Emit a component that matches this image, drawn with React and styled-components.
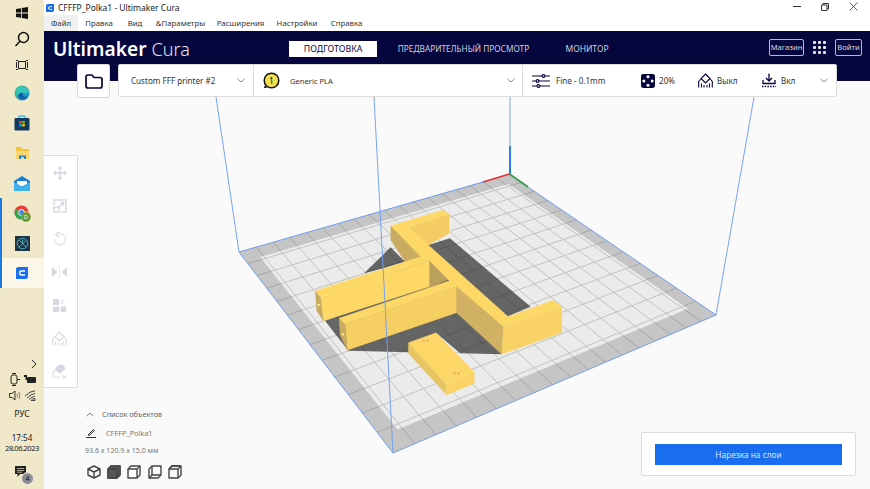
import React from 'react';
import styled, { createGlobalStyle } from 'styled-components';

const navy = '#06063f';
const uiFont = '"Noto Sans", "Open Sans", sans-serif';

const GlobalStyle = createGlobalStyle`
  html, body { margin: 0; padding: 0; width: 870px; height: 489px; overflow: hidden; }
  body { font-family: ${uiFont}; background: #fafafa; }
`;

const Desktop = styled.div`
  display: flex;
  width: 870px;
  height: 489px;
  overflow: hidden;
`;

/* ---------- windows taskbar ---------- */
const Taskbar = styled.div`
  width: 44px;
  flex: none;
  display: flex;
  flex-direction: column;
  background: #f1e7c9;
`;

const TaskItem = styled.div`
  height: ${({ $h }) => $h || 30}px;
  display: flex;
  align-items: center;
  justify-content: center;
  background: ${({ $active }) => ($active ? '#faf6e8' : 'transparent')};
  border-left: 2px solid ${({ $open }) => ($open ? '#1a7ae0' : 'transparent')};
  border-right: 2px solid transparent;
`;

const Tray = styled.div`
  margin-top: auto;
  display: flex;
  flex-direction: column;
  align-items: center;
  color: #222;
  font-size: 8.5px;
  padding-bottom: 7px;
`;

const TrayChevron = styled.div`
  align-self: flex-end;
  padding-right: 7px;
  height: 12px;
`;

const TrayRow = styled.div`
  display: flex;
  gap: 3px;
  height: 16px;
  align-items: center;
`;

const TrayLang = styled.div`
  margin-top: 2px;
  height: 27px;
  line-height: 18px;
`;

const TrayTime = styled.div`
  line-height: 11px;
  font-size: 8px;
`;

const TrayDate = styled.div`
  line-height: 11px;
  font-size: 7.6px;
  letter-spacing: -0.5px;
  white-space: nowrap;
`;

const Notify = styled.div`
  position: relative;
  margin-top: 12px;
  width: 16px;
  height: 16px;
  padding-left: 1px;
  box-sizing: border-box;
`;

const NotifyBadge = styled.span`
  position: absolute;
  right: -4px;
  bottom: -3px;
  width: 13px;
  height: 13px;
  border-radius: 50%;
  background: #8f8f8f;
  border: 1px solid #eee;
  box-sizing: border-box;
  color: #111;
  font-size: 7.5px;
  line-height: 11px;
  text-align: center;
`;

/* ---------- window chrome ---------- */
const Window = styled.div`
  flex: 1;
  display: flex;
  flex-direction: column;
  background: #fafafa;
  min-width: 0;
`;

const TitleBar = styled.div`
  height: 15px;
  background: #fff;
  display: flex;
  align-items: center;
  padding: 0 0 0 2px;
  font-size: 8.5px;
  color: #222;
  gap: 4px;
`;

const WindowButtons = styled.div`
  margin-left: auto;
  display: flex;
  align-items: center;
  gap: 20px;
  padding-right: 12px;
  height: 100%;
  position: relative;
  top: -1px;
`;

const MenuBar = styled.div`
  height: 16px;
  background: #fff;
  display: flex;
  align-items: center;
  font-size: 7.8px;
  color: #333;
`;

const MenuItem = styled.div`
  height: 100%;
  display: flex;
  align-items: center;
  width: ${({ $w }) => $w}px;
  justify-content: center;
  background: ${({ $active }) => ($active ? '#f0f0f0' : 'transparent')};
`;

const Header = styled.div`
  height: 50px;
  background: ${navy};
  display: flex;
  align-items: flex-start;
  padding-top: 8px;
  box-sizing: border-box;
`;

const Logo = styled.div`
  width: 245px;
  padding-left: 9px;
  box-sizing: border-box;
  font-size: 19.2px;
  line-height: 20px;
  color: #fff;
  font-weight: 600;
  white-space: nowrap;
`;

const LogoLight = styled.span`
  font-weight: 300;
  font-size: 18px;
  margin-left: 5px;
  color: #e4e4ee;
`;

const Tabs = styled.div`
  display: flex;
  align-items: center;
  height: 17px;
  margin-top: 1px;
`;

const Tab = styled.div`
  height: 16px;
  line-height: 16px;
  font-size: ${({ $fs }) => $fs || 8.8}px;
  text-align: center;
  width: ${({ $w }) => $w}px;
  margin-right: ${({ $gap }) => $gap || 0}px;
  white-space: nowrap;
  background: ${({ $active }) => ($active ? '#fff' : 'transparent')};
  color: ${({ $active }) => ($active ? navy : '#cfcfdc')};
`;

const HeaderRight = styled.div`
  margin-left: auto;
  margin-right: 8px;
  display: flex;
  align-items: center;
  height: 17px;
`;

const OutlineButton = styled.div`
  height: 17px;
  width: ${({ $w }) => $w}px;
  box-sizing: border-box;
  border: 1px solid #b9b9cc;
  border-radius: 2px;
  color: #d8d8e4;
  font-size: 7.6px;
  line-height: 15px;
  text-align: center;
`;

const AppsGrid = styled.div`
  margin: 0 9px;
  display: grid;
  grid-template-columns: repeat(3, 3px);
  gap: 2px;
`;

const AppsDot = styled.span`
  width: 3px;
  height: 3px;
  background: #e8e8f0;
  border-radius: 1px;
`;

/* ---------- stage ---------- */
const Stage = styled.div`
  position: relative;
  flex: 1;
  margin-top: -17px;
  display: flex;
  flex-direction: column;
  min-height: 0;
`;

const Scene = styled.svg`
  position: absolute;
  top: 0;
  left: 0;
  width: 826px;
  height: 425px;
`;

const TopRow = styled.div`
  position: relative;
  display: flex;
  align-items: flex-start;
  gap: 8px;
  margin-left: 33px;
`;

const Card = styled.div`
  background: #fff;
  border: 1px solid #dcdcdc;
  box-sizing: border-box;
  border-radius: 2px;
`;

const FolderButton = styled(Card)`
  width: 33px;
  height: 34px;
  display: flex;
  align-items: center;
  justify-content: center;
`;

const PrintBar = styled(Card)`
  width: 719px;
  height: 33px;
  display: flex;
  align-items: stretch;
  color: #333;
`;

const PrintSection = styled.div`
  width: ${({ $w }) => $w}px;
  box-sizing: border-box;
  display: flex;
  align-items: center;
  padding: 0 ${({ $pr }) => $pr || 0}px 0 ${({ $pl }) => $pl || 0}px;
  border-right: ${({ $last }) => ($last ? 'none' : '1px solid #dcdcdc')};
  font-size: ${({ $fs }) => $fs || 8.5}px;
  white-space: nowrap;
`;

const MaterialName = styled.span`
  margin-left: 10px;
`;

const Chevron = styled.span`
  margin-left: auto;
  display: flex;
`;

const Setting = styled.div`
  display: flex;
  align-items: center;
  gap: ${({ $gap }) => $gap || 5}px;
  width: ${({ $w }) => $w}px;
  font-size: 8.1px;
`;

const SideTools = styled(Card)`
  position: relative;
  margin-top: 57px;
  width: 34px;
  height: 233px;
  border-left: none;
  border-radius: 0 2px 2px 0;
  display: flex;
  flex-direction: column;
`;

const SideTool = styled.div`
  height: 33.2px;
  flex: none;
  display: flex;
  align-items: center;
  justify-content: center;
  padding-right: 2px;
`;

const BottomRow = styled.div`
  position: relative;
  margin-top: auto;
  display: flex;
  justify-content: space-between;
  align-items: flex-end;
  padding: 0 14px 13px 41px;
`;

const ObjectInfo = styled.div`
  display: flex;
  flex-direction: column;
  margin-bottom: -3px;
  color: #777;
  font-size: 7.3px;
`;

const ObjectHead = styled.div`
  display: flex;
  align-items: center;
  gap: 8px;
  height: 14px;
  padding-left: 1px;
  color: #666;
`;

const ObjectName = styled.div`
  display: flex;
  align-items: center;
  gap: 10px;
  height: 14px;
  margin-top: 5px;
  padding-left: 1px;
  font-size: 7.3px;
`;

const ObjectSize = styled.div`
  margin-top: 4px;
  height: 12px;
  line-height: 12px;
  font-size: 7.05px;
`;

const ViewRow = styled.div`
  display: flex;
  gap: 6.4px;
  margin-top: 9px;
  padding-left: 1.5px;
`;

const SlicePanel = styled(Card)`
  width: 215px;
  height: 44px;
  padding: 11px 13px;
`;

const SliceButton = styled.div`
  height: 21px;
  background: #196ef0;
  color: #d3e2ff;
  font-size: 8.3px;
  line-height: 21px;
  text-align: center;
`;

/* ---------- small drawings ---------- */
const Win = () => (
  <svg width="12" height="12" viewBox="0 0 12 12" fill="#111">
    <path d="M0 2 5 1.2V5.6H0ZM5.8 1 12 0V5.6H5.8ZM0 6.4H5V10.8L0 10ZM5.8 6.4H12V12L5.8 11Z" />
  </svg>
);

const Search = () => (
  <svg width="16" height="16" viewBox="0 0 16 16" fill="none" stroke="#111" strokeWidth="1.5">
    <circle cx="9.5" cy="6.5" r="5" />
    <path d="M6 10.2 1.5 15" />
  </svg>
);

const TaskView = () => (
  <svg width="12" height="12" viewBox="0 0 12 12" fill="none" stroke="#222" strokeWidth="1">
    <rect x="2.5" y="2.5" width="7" height="7" />
    <path d="M0 1.5H2M0 10.5H2M10 1.5H12M10 10.5H12M.5 3V9M11.5 3V9" />
  </svg>
);

const Edge = () => (
  <svg width="16" height="16" viewBox="0 0 16 16">
    <defs>
      <linearGradient id="edgeA" x1="0" y1="0" x2="1" y2="1">
        <stop offset="0" stopColor="#3fd07f" />
        <stop offset="1" stopColor="#1b7fd0" />
      </linearGradient>
    </defs>
    <circle cx="8" cy="8" r="7.5" fill="url(#edgeA)" />
    <path d="M3 4C6 1 12 1.5 14.5 6 15 8 12.5 9 10 8 8 7 5 7 3.5 10 3 11 2 7 3 4Z" fill="#36c7c0" />
    <path d="M4 11C5 7 9 7 9 9 8 11 11 13 14 11 12 15 6 16 4 11Z" fill="#0f5fb0" />
  </svg>
);

const Store = () => (
  <svg width="16" height="16" viewBox="0 0 16 16">
    <path d="M5 3V1.2H11V3" fill="none" stroke="#29b4e8" strokeWidth="1.2" />
    <rect x="0.5" y="3" width="15" height="12.5" rx="1" fill="#14395e" />
    <rect x="5.2" y="6" width="2.5" height="2.5" fill="#f25022" />
    <rect x="8.3" y="6" width="2.5" height="2.5" fill="#7fba00" />
    <rect x="5.2" y="9" width="2.5" height="2.5" fill="#00a4ef" />
    <rect x="8.3" y="9" width="2.5" height="2.5" fill="#ffb900" />
  </svg>
);

const FolderApp = () => (
  <svg width="15" height="14" viewBox="0 0 15 14">
    <path d="M1 1H6L7.5 3H14V13H1Z" fill="#f7c33f" />
    <path d="M1 5H14V13H1Z" fill="#fbd873" />
    <path d="M4 13V9.5H11V13H9V11H6V13Z" fill="#2b7fd0" />
  </svg>
);

const Mail = () => (
  <svg width="16" height="15" viewBox="0 0 16 15">
    <path d="M8 0 16 5V15H0V5Z" fill="#1a7fd4" />
    <path d="M3 5H13V8L8 10.5 3 8Z" fill="#fff" />
    <path d="M0 6 8 11 16 6V15H0Z" fill="#3fb2ee" />
  </svg>
);

const Chrome = () => (
  <svg width="17" height="17" viewBox="0 0 17 17">
    <circle cx="7.5" cy="7.5" r="7" fill="#e34133" />
    <path d="M1.5 11A7 7 0 0 1 1.5 4L7.5 7.5 7 14.5C4.7 14.5 2.7 13 1.5 11Z" fill="#32a853" />
    <path d="M7.5 7.5 14 6C15 9 14 12 11 13.5 9.5 14.5 8 14.5 7 14.5Z" fill="#fbc02d" />
    <circle cx="7.5" cy="7.5" r="3.2" fill="#fff" />
    <circle cx="7.5" cy="7.5" r="2.5" fill="#4285f4" />
    <circle cx="12" cy="12" r="4.8" fill="#6a9a35" />
    <text x="12" y="14" fontSize="6" textAnchor="middle" fill="#eef">D</text>
  </svg>
);

const DarkApp = () => (
  <svg width="15" height="15" viewBox="0 0 15 15">
    <rect width="15" height="15" fill="#1d3442" />
    <circle cx="7.5" cy="7.5" r="5.3" fill="none" stroke="#4fb3c9" strokeWidth="1" />
    <path d="M4 4 11 11M7.5 3.5V8L11 4.5M4 11 7.5 8" fill="none" stroke="#4fb3c9" strokeWidth="0.9" />
  </svg>
);

const CuraIcon = ({ size = 12 }) => (
  <svg width={size} height={size} viewBox="0 0 12 12">
    <path d="M2.5 0H12V9.5A2.5 2.5 0 0 1 9.5 12H0V2.5A2.5 2.5 0 0 1 2.5 0Z" fill="#196ef0" />
    <path d="M9 4H5.5Q3.6 4 3.6 6T5.5 8H9" fill="none" stroke="#fff" strokeWidth="1.4" />
  </svg>
);

const FolderIcon = () => (
  <svg width="18" height="15" viewBox="0 0 18 15" fill="none" stroke={navy} strokeWidth="1.7">
    <path d="M1 3Q1 1 3 1H7L9 3.5H15Q17 3.5 17 5.5V12Q17 14 15 14H3Q1 14 1 12Z" strokeLinejoin="round" />
  </svg>
);

const Down = ({ color = '#777' }) => (
  <svg width="8" height="5" viewBox="0 0 8 5" fill="none" stroke={color} strokeWidth="0.9">
    <path d="M.5 .8 4 4 7.5 .8" />
  </svg>
);

const MaterialBadge = () => (
  <svg width="17" height="17" viewBox="0 0 17 17">
    <circle cx="8.5" cy="8.5" r="7.3" fill="#f6df4f" stroke="#111" strokeWidth="1.5" />
    <path d="M2 13 1 16H4Z" fill="#111" />
    <text x="8.5" y="11.5" fontSize="8.5" textAnchor="middle" fill="#111" fontFamily="Noto Sans">1</text>
  </svg>
);

const Sliders = () => (
  <svg width="18" height="14" viewBox="0 0 18 14" fill="none" stroke={navy} strokeWidth="1.2">
    <path d="M0 2H10M13 2H18M0 7H4M7 7H18M0 12H5M8 12H18" />
    <circle cx="11.5" cy="2" r="1.4" />
    <circle cx="5.5" cy="7" r="1.4" />
    <circle cx="6.5" cy="12" r="1.4" />
  </svg>
);

const Infill = () => (
  <svg width="14" height="14" viewBox="0 0 13 13">
    <rect width="13" height="13" rx="2" fill={navy} />
    <g fill="#fff">
      <circle cx="6.5" cy="2.6" r="1.4" />
      <circle cx="2.6" cy="6.5" r="1.4" />
      <circle cx="10.4" cy="6.5" r="1.4" />
      <circle cx="6.5" cy="10.4" r="1.4" />
    </g>
  </svg>
);

const SupportIcon = ({ color = navy }) => (
  <svg width="15" height="15" viewBox="0 0 15 15" fill="none" stroke={color} strokeWidth="1.1">
    <path d="M7.5 1 12 5.5 7.5 10 3 5.5Z" />
    <path d="M.7 14.5V8.5L3 6M14.3 14.5V8.5L12 6" />
    <path d="M3.5 14.5V10.5M6 14.5V12M9 14.5V12M11.5 14.5V10.5" />
  </svg>
);

const Adhesion = () => (
  <svg width="14" height="15" viewBox="0 0 14 15" fill="none" stroke={navy} strokeWidth="1.3">
    <path d="M7 .5V7.5M4 5 7 8 10 5" />
    <path d="M1 7V10.5H13V7" />
    <path d="M0 13.5H14" strokeDasharray="1.5 1.2" />
  </svg>
);

const sideColor = '#d7d7e3';

const MoveTool = () => (
  <svg width="14" height="14" viewBox="0 0 14 14" fill="none" stroke={sideColor} strokeWidth="1.4">
    <path d="M7 1V13M1 7H13M5.2 2.8 7 1 8.8 2.8M5.2 11.2 7 13 8.8 11.2M2.8 5.2 1 7 2.8 8.8M11.2 5.2 13 7 11.2 8.8" />
  </svg>
);

const ScaleTool = () => (
  <svg width="14" height="14" viewBox="0 0 14 14" fill="none" stroke={sideColor} strokeWidth="1.4">
    <path d="M1 6V1H13V13H8" />
    <rect x="1" y="8" width="5" height="5" />
    <path d="M6 8 10.5 3.5M7.5 3.5H10.5V6.5" />
  </svg>
);

const RotateTool = () => (
  <svg width="14" height="14" viewBox="0 0 14 14" fill="none" stroke={sideColor} strokeWidth="1.4">
    <path d="M1.5 7.5A5.5 5.5 0 1 0 5 2.2" strokeDasharray="2 1" />
    <path d="M5.8 0 3 2.5 5.8 5" />
  </svg>
);

const MirrorTool = () => (
  <svg width="15" height="12" viewBox="0 0 15 12" fill={sideColor}>
    <path d="M0 1 5.5 6 0 11ZM15 1 9.5 6 15 11Z" />
    <path d="M7.5 0V12" stroke={sideColor} strokeWidth="1" strokeDasharray="1.5 1" />
  </svg>
);

const PerModelTool = () => (
  <svg width="13" height="13" viewBox="0 0 13 13" fill={sideColor}>
    <rect width="6" height="6" />
    <rect x="7.5" y="7.5" width="5.5" height="5.5" />
    <rect y="7.5" width="6" height="5.5" />
    <path d="M8 1 9.5 2.5M11 .5 8 5M10.5 4 12 5.5" stroke={sideColor} fill="none" />
  </svg>
);

const BlockerTool = () => (
  <svg width="15" height="15" viewBox="0 0 15 15" fill="none" stroke={sideColor} strokeWidth="1.1">
    <path d="M6 2 10 .8 13 4.5 8 9 3.5 5.5Z" fill={sideColor} />
    <path d="M1 14.5V8.5L3 6.5M4 14.5V11.5M7 14.5V12M10.5 11.5 14 14.5M14 11.5 10.5 14.5" />
  </svg>
);

const Cube = ({ shade }) => (
  <svg width="14" height="14" viewBox="0 0 14 14" fill="none" stroke="#444" strokeWidth="1.4" strokeLinejoin="round">
    {shade === 'iso' && (
      <>
        <path d="M7 1 13 4V10L7 13 1 10V4Z" />
        <path d="M1 4 7 7 13 4M7 7V13" />
      </>
    )}
    {shade !== 'iso' && <path d="M1 4 4 1H13V10L10 13H1Z" />}
    {shade === 'front' && <path d="M1 4H10V13H1Z M1 4 4 1H13V10L10 13" fill="#555" />}
    {shade === 'top' && <path d="M1 4H10V13M10 4 13 1" />}
    {shade === 'left' && <path d="M4 1V10H13M4 10 1 13" />}
    {shade === 'right' && <path d="M1 4H10V13M10 4 13 1M1 4 4 1H13" />}
  </svg>
);

/* ---------- the build plate, a perspective grid ---------- */
const corners = [[509, 174], [239, 252], [393, 453], [716, 315]];

function makeHomography([p0, p1, p2, p3]) {
  const dx1 = p1[0] - p2[0];
  const dx2 = p3[0] - p2[0];
  const dy1 = p1[1] - p2[1];
  const dy2 = p3[1] - p2[1];
  const sx = p0[0] - p1[0] + p2[0] - p3[0];
  const sy = p0[1] - p1[1] + p2[1] - p3[1];
  const den = dx1 * dy2 - dx2 * dy1;
  const g = (sx * dy2 - dx2 * sy) / den;
  const h = (dx1 * sy - sx * dy1) / den;
  const a = p1[0] - p0[0] + g * p1[0];
  const b = p3[0] - p0[0] + h * p3[0];
  const d = p1[1] - p0[1] + g * p1[1];
  const e = p3[1] - p0[1] + h * p3[1];
  return (u, v) => {
    const w = g * u + h * v + 1;
    return [(a * u + b * v + p0[0]) / w, (d * u + e * v + p0[1]) / w];
  };
}

const project = makeHomography(corners);
const CELLS_U = 18;
const CELLS_V = 13;
const EDGE_U = 0.8 / CELLS_U;
const EDGE_V = 0.8 / CELLS_V;
const pt = (u, v) => project(u, v).map((n) => n.toFixed(1)).join(',');
const steps = (count) => Array.from({ length: count - 1 }, (_, i) => (i + 1) / count);

/* model faces, traced at three times the screen scale */
const shadowFaces = [
  '222,250 302,172 345,215 280,235',
  '415,165 480,145 722,350 652,380 640,410 635,493 510,490 440,430 355,487 175,482 105,392 150,375',
];

const modelFaces = [
  ['#c9ab62', '302,107 395,192 395,215 345,215 302,150'],
  ['#f3cd64', '356,112 477,72 477,130 415,165'],
  ['#bba05d', '418,212 478,268 418,292'],
  ['#fdd866', '92,322 418,212 418,290 100,393'],
  ['#c8aa60', '76,302 92,322 100,393 80,362'],
  ['#d1b163', '500,290 640,410 635,493 500,368'],
  ['#f6cf63', '165,403 500,290 500,368 172,481'],
  ['#c8aa60', '147,385 165,403 172,481 150,435'],
  ['#f8d265', '640,410 815,350 815,428 635,493'],
  ['#fdd866', '302,107 460,60 477,72 356,112 655,380 790,330 815,350 640,410 500,290 165,403 147,385 478,272 418,212 92,322 76,302 392,200'],
  ['#e8c563', '355,458 468,582 470,615 355,490'],
  ['#f9d365', '468,582 553,547 553,580 470,615'],
  ['#fcd767', '355,458 438,428 553,547 468,582'],
];

const Plate = () => (
  <Scene viewBox="44 64 826 425">
    <polygon points={corners.map((c) => c.join(',')).join(' ')} fill="#c5c5c5" />
    <polygon
      points={[pt(EDGE_U, EDGE_V), pt(1 - EDGE_U, EDGE_V), pt(1 - EDGE_U, 1 - EDGE_V), pt(EDGE_U, 1 - EDGE_V)].join(' ')}
      fill="#ebebeb"
    />
    <g strokeWidth="1" fill="none">
      {steps(CELLS_U).map((t) => (
        <g key={t}>
          <polyline stroke="#c2c2c2" points={`${pt(t, EDGE_V)} ${pt(t, 1 - EDGE_V)}`} />
          <polyline stroke="#a6a6a6" points={`${pt(t, 0)} ${pt(t, EDGE_V)}`} />
          <polyline stroke="#a6a6a6" points={`${pt(t, 1 - EDGE_V)} ${pt(t, 1)}`} />
        </g>
      ))}
      {steps(CELLS_V).map((t) => (
        <g key={t}>
          <polyline stroke="#c2c2c2" points={`${pt(EDGE_U, t)} ${pt(1 - EDGE_U, t)}`} />
          <polyline stroke="#a6a6a6" points={`${pt(0, t)} ${pt(EDGE_U, t)}`} />
          <polyline stroke="#a6a6a6" points={`${pt(1 - EDGE_U, t)} ${pt(1, t)}`} />
        </g>
      ))}
    </g>
    <g transform="translate(290 190) scale(0.3333)">
      {shadowFaces.map((points) => (
        <polygon key={points} points={points} fill="#303030" fillOpacity="0.72" />
      ))}
      {modelFaces.map(([fill, points]) => (
        <polygon key={points} points={points} fill={fill} stroke={fill} strokeWidth="0.8" />
      ))}
      <circle cx="86" cy="345" r="3.5" fill="#fff3a0" />
      <circle cx="159" cy="433" r="3.5" fill="#fff3a0" />
      <g fill="#c9a850">
        <ellipse cx="402" cy="452" rx="2" ry="4" />
        <ellipse cx="413" cy="452" rx="2" ry="4" />
        <ellipse cx="494" cy="550" rx="2" ry="4" />
        <ellipse cx="506" cy="550" rx="2" ry="4" />
      </g>
    </g>
    <g fill="none" stroke="#6f9ff0" strokeWidth="1">
      <polyline points="239,252 393,453 716,315 528,187" />
      <path d="M483 182 239 252" />
      <path d="M216 97 239 252M374 97 393 453M754 97 716 315M510 97 510 146" strokeOpacity="0.95" />
    </g>
    <path d="M509.5 174 483 182" stroke="#e0303a" strokeWidth="1.6" />
    <path d="M509.5 174 528 187" stroke="#2b9a45" strokeWidth="1.6" />
    <path d="M510 174V146" stroke="#1a6ef0" strokeWidth="1.8" />
  </Scene>
);

const taskApps = [
  { icon: <Edge /> },
  { icon: <Store /> },
  { icon: <FolderApp /> },
  { icon: <Mail /> },
  { icon: <Chrome />, open: true },
  { icon: <DarkApp />, open: true },
  { icon: <CuraIcon size={12} />, open: true, active: true },
];

const menus = [
  ['Файл', 34, true],
  ['Правка', 42],
  ['Вид', 30],
  ['&Параметры', 61],
  ['Расширения', 59],
  ['Настройки', 54],
  ['Справка', 45],
];

function SupportToolPale() {
  return <SupportIcon color={sideColor} />;
}

const sideTools = [MoveTool, ScaleTool, RotateTool, MirrorTool, PerModelTool, SupportToolPale, BlockerTool];

export default function App() {
  return (
    <>
      <GlobalStyle />
      <Desktop>
        <Taskbar>
          <TaskItem $h={26}><Win /></TaskItem>
          <TaskItem $h={25}><Search /></TaskItem>
          <TaskItem $h={27}><TaskView /></TaskItem>
          {taskApps.map((app, i) => (
            <TaskItem key={i} $open={app.open} $active={app.active}>{app.icon}</TaskItem>
          ))}
          <Tray>
            <TrayChevron>
              <svg width="6" height="10" viewBox="0 0 6 10" fill="none" stroke="#222" strokeWidth="1">
                <path d="M1 1 5 5 1 9" />
              </svg>
            </TrayChevron>
            <TrayRow>
              <svg width="12" height="13" viewBox="0 0 12 13" fill="none" stroke="#222" strokeWidth="1">
                <rect x="2" y="2" width="6" height="9" rx="2" />
                <path d="M8 6.5H11M3 .5H7M3 12.5H7" />
              </svg>
              <svg width="12" height="10" viewBox="0 0 12 10" fill="#222">
                <rect x="3" y="3" width="9" height="6" rx="1" />
                <path d="M0 1H3V6H1.5V3H0Z" />
              </svg>
            </TrayRow>
            <TrayRow>
              <svg width="12" height="11" viewBox="0 0 12 11" fill="none" stroke="#222" strokeWidth="0.9">
                <path d="M.5 3.5H3L6 1V10L3 7.5H.5Z" />
                <path d="M8 3.5Q9 5.5 8 7.5M10 2Q11.5 5.5 10 9" stroke="#777" />
              </svg>
              <svg width="12" height="11" viewBox="0 0 12 11" fill="none" stroke="#333" strokeWidth="0.9">
                <path d="M1 6Q6 1 11 .8M3 8Q7 4 11 3.5M5 9.5Q8 6.5 11 6.3M7 10.5H11V8.5Q8.5 8.5 7 10.5Z" />
              </svg>
            </TrayRow>
            <TrayLang>РУС</TrayLang>
            <TrayTime>17:54</TrayTime>
            <TrayDate>28.06.2023</TrayDate>
            <Notify>
              <svg width="11" height="11" viewBox="0 0 11 11">
                <path d="M0 0H11V8H5L2.5 11V8H0Z" fill="#222" />
                <path d="M2 2.5H9M2 4.5H9M2 6.2H7" stroke="#f1e7c9" strokeWidth="0.7" />
              </svg>
              <NotifyBadge>4</NotifyBadge>
            </Notify>
          </Tray>
        </Taskbar>

        <Window>
          <TitleBar>
            <CuraIcon size={8} />
            <span>CFFFP_Polka1 - Ultimaker Cura</span>
            <WindowButtons>
              <svg width="8" height="1" viewBox="0 0 8 1"><path d="M0 .5H8" stroke="#333" /></svg>
              <svg width="8" height="8" viewBox="0 0 8 8" fill="none" stroke="#333">
                <path d="M.5 2H6V7.5H.5ZM2 2V.5H7.5V6H6" />
              </svg>
              <svg width="9" height="9" viewBox="0 0 9 9" stroke="#333" strokeWidth="0.8">
                <path d="M.5 .5 8.5 8.5M8.5 .5 .5 8.5" />
              </svg>
            </WindowButtons>
          </TitleBar>
          <MenuBar>
            {menus.map(([label, width, active]) => (
              <MenuItem key={label} $w={width} $active={active}>{label}</MenuItem>
            ))}
          </MenuBar>
          <Header>
            <Logo>Ultimaker<LogoLight>Cura</LogoLight></Logo>
            <Tabs>
              <Tab $active $w={88} $gap={10}>ПОДГОТОВКА</Tab>
              <Tab $w={153} $gap={17} $fs={8.3}>ПРЕДВАРИТЕЛЬНЫЙ ПРОСМОТР</Tab>
              <Tab $w={60} $fs={8.5}>МОНИТОР</Tab>
            </Tabs>
            <HeaderRight>
              <OutlineButton $w={35}>Магазин</OutlineButton>
              <AppsGrid>
                {Array.from({ length: 9 }, (_, i) => <AppsDot key={i} />)}
              </AppsGrid>
              <OutlineButton $w={27}>Войти</OutlineButton>
            </HeaderRight>
          </Header>

          <Stage>
            <Plate />
            <TopRow>
              <FolderButton><FolderIcon /></FolderButton>
              <PrintBar>
                <PrintSection $w={135} $pl={12} $pr={8} $fs={8.1}>
                  Custom FFF printer #2
                  <Chevron><Down /></Chevron>
                </PrintSection>
                <PrintSection $w={269} $pl={9} $pr={7} $fs={7.6}>
                  <MaterialBadge />
                  <MaterialName>Generic PLA</MaterialName>
                  <Chevron><Down /></Chevron>
                </PrintSection>
                <PrintSection $w={313} $pl={9} $pr={8} $last>
                  <Setting $w={109} $gap={6}><Sliders /><span>Fine - 0.1mm</span></Setting>
                  <Setting $w={57} $gap={4}><Infill /><span>20%</span></Setting>
                  <Setting $w={64} $gap={4}><SupportIcon /><span>Выкл</span></Setting>
                  <Setting $w={40} $gap={5}><Adhesion /><span>Вкл</span></Setting>
                  <Chevron><Down /></Chevron>
                </PrintSection>
              </PrintBar>
            </TopRow>

            <SideTools>
              {sideTools.map((Tool, i) => <SideTool key={i}><Tool /></SideTool>)}
            </SideTools>

            <BottomRow>
              <ObjectInfo>
                <ObjectHead>
                  <svg width="8" height="5" viewBox="0 0 8 5" fill="none" stroke="#777" strokeWidth="0.9">
                    <path d="M.5 4.2 4 1 7.5 4.2" />
                  </svg>
                  <span>Список объектов</span>
                </ObjectHead>
                <ObjectName>
                  <svg width="10" height="10" viewBox="0 0 10 10" fill="none" stroke="#333">
                    <path d="M2 7 7.5 1.5 8.5 2.5 3 7.5ZM0 9.5H10" />
                  </svg>
                  <span>CFFFP_Polka1</span>
                </ObjectName>
                <ObjectSize>93.6 x 120.9 x 15.0 мм</ObjectSize>
                <ViewRow>
                  <Cube shade="iso" />
                  <Cube shade="front" />
                  <Cube shade="top" />
                  <Cube shade="left" />
                  <Cube shade="right" />
                </ViewRow>
              </ObjectInfo>
              <SlicePanel>
                <SliceButton>Нарезка на слои</SliceButton>
              </SlicePanel>
            </BottomRow>
          </Stage>
        </Window>
      </Desktop>
    </>
  );
}
